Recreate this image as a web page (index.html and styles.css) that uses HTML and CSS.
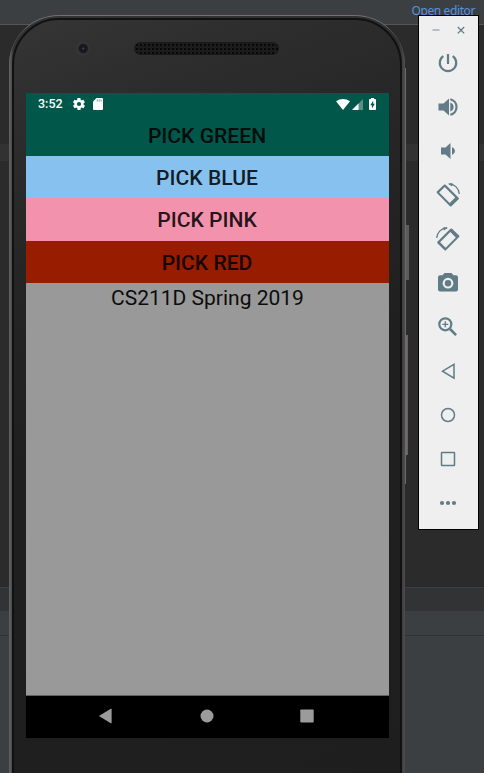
FILE: index.html
```
<!DOCTYPE html>
<html lang="en">
<head>
<meta charset="utf-8">
<title>Android Emulator</title>
<link rel="stylesheet" href="styles.css">
</head>
<body>
<div class="desktop">
  <div class="ide">
    <div class="ide-top"><span class="link">Open editor</span></div>
    <div class="ide-editor"><div class="ide-line"></div></div>
    <div class="ide-tabs"></div>
    <div class="ide-head"></div>
    <div class="ide-panel"></div>
  </div>

  <div class="side-button power"></div>
  <div class="side-button volume"></div>
  <div class="rail"></div>
  <div class="phone">
    <div class="bezel">
      <div class="face">
        <div class="camera"></div>
        <div class="speaker"></div>
      </div>
      <div class="screen">
        <div class="status">
          <span class="time">3:52</span>
          <svg class="gear" viewBox="2 2 20 20"><path fill="#fff" d="M19.4 13c0-.3.1-.6.1-1s0-.7-.1-1l2.1-1.600c.2-.2.200-.4.1-.6l-2-3.500c-.1-.2-.4-.3-.6-.2l-2.500 1c-.5-.4-1.100-.7-1.700-1l-.4-2.600c0-.3-.2-.5-.5-.5h-4c-.3 0-.5.2-.5.400l-.4 2.700c-.6.2-1.100.6-1.700 1l-2.500-1c-.2-.1-.5 0-.6.2l-2 3.500c-.1.2-.1.500.1.600L4.500 11c0 .3-.1.700-.1 1s0 .7.1 1l-2.100 1.600c-.2.200-.2.400-.1.600l2 3.500c.1.200.4.300.6.200l2.500-1c.5.400 1.100.7 1.700 1l.4 2.600c0 .3.200.5.500.5h4c.3 0 .5-.2.5-.4l.4-2.700c.6-.2 1.100-.6 1.700-1l2.500 1c.2.100.5 0 .6-.2l2-3.500c.1-.2.100-.5-.1-.6zM12 15.500a3.500 3.500 0 1 1 0-7 3.500 3.500 0 0 1 0 7z"/></svg>
          <svg class="sd" viewBox="0 0 10 12"><path fill="#fff" d="M3.500 0H9a1 1 0 0 1 1 1v10a1 1 0 0 1-1 1H1a1 1 0 0 1-1-1V3.500z"/><path stroke="#01574a" stroke-width=".6" d="M4.300 1.500v2M6.200 1.500v2M8.100 1.500v2"/></svg>
          <span class="gap"></span>
          <svg class="wifi" viewBox="0 0 14 11"><path fill="#fff" d="M0 2.200Q7-2 14 2.200L7 11z"/></svg>
          <svg class="signal" viewBox="0 0 11 11"><path fill="#5b9087" d="M11 0v11H0z"/><path fill="#fff" d="M6.500 4.500V11H0z"/></svg>
          <svg class="battery" viewBox="0 0 7 12"><path fill="#fff" d="M2 0h3v1h1.200q.8 0 .8.800v9.400q0 .8-.8.800H.8Q0 12 0 11.200V1.800Q0 1 .8 1H2z"/><path fill="#01574a" d="M4.200 2.800 1.300 7.200h1.600v3.200l2.900-4.600H4.200z"/></svg>
        </div>
        <div class="pick green">PICK GREEN</div>
        <div class="pick blue">PICK BLUE</div>
        <div class="pick pink">PICK PINK</div>
        <div class="pick red">PICK RED</div>
        <div class="content">CS211D Spring 2019</div>
        <div class="nav">
          <svg viewBox="0 0 16 16"><path fill="#9b9b9b" d="M-.1 8 11.800.800Q12.600.5 12.600 1.200v13.600q0 .7-.8.400z"/></svg>
          <svg viewBox="0 0 16 16"><circle cx="8" cy="8" r="6.500" fill="#9b9b9b"/></svg>
          <svg viewBox="0 0 16 16"><rect x="1.300" y="1.500" width="13.400" height="13" rx=".8" fill="#9b9b9b"/></svg>
        </div>
      </div>
    </div>
  </div>

  <div class="toolbar">
    <div class="window">
      <svg viewBox="0 0 12 12"><path d="M2.500 6h7" stroke="#93a5ab" stroke-width="1.300"/></svg>
      <svg viewBox="0 0 12 12"><path d="m2.800 3 6.400 6.400m0-6.400-6.400 6.400" stroke="#617c87" stroke-width="1.300"/></svg>
    </div>
    <svg class="tool" viewBox="0 0 24 24"><path class="line" d="M12 3v10M7.300 5.200a8.200 8.200 0 1 0 9.400 0"/></svg>
    <svg class="tool" viewBox="0 0 24 24"><path class="solid" d="M2.500 8.500h5l5.500-5v17l-5.500-5h-5zM14.300 7.500q3.300 1.300 3.300 4.500t-3.300 4.500z"/><path class="line" d="M14.300 4.200a8 8 0 0 1 0 15.600"/></svg>
    <svg class="tool" viewBox="0 0 24 24"><path class="solid" d="M5 8.500h4.500l5-4.500v16l-5-4.500H5zM16 8q3 1.300 3 4t-3 4z"/></svg>
    <svg class="tool" viewBox="0 0 24 24"><path class="solid" fill-rule="evenodd" d="M8 1.800q.8-.7 1.600 0l13 13q.6.700 0 1.400l-7.200 7.100q-.7.600-1.400 0L.9 9.900q-.6-.7 0-1.400zM8.700 4.100 3.200 9.500l10.500 10.400 5.500-5.400z"/><path class="line thin" d="M13 1.200c5.500-.5 10 4.300 10.300 9.800"/><path class="solid" d="m12 .8 4.500-.7-.4 3.500z"/></svg>
    <svg class="tool" viewBox="0 0 24 24"><g transform="matrix(-1 0 0 1 24 0)"><path class="solid" fill-rule="evenodd" d="M8 1.800q.8-.7 1.600 0l13 13q.6.700 0 1.400l-7.200 7.100q-.7.600-1.400 0L.9 9.900q-.6-.7 0-1.400zM9.700 5 4.200 10.400 14.400 20.700l5.500-5.400z"/><path class="line thin" d="M13 1.200c5.500-.5 10 4.300 10.300 9.800"/><path class="solid" d="m12 .8 4.500-.7-.4 3.500z"/></g></svg>
    <svg class="tool" viewBox="0 0 24 24"><path class="solid" fill-rule="evenodd" d="M8.500 2h7l2 2.300H20q2 0 2 2v12.200q0 2-2 2H4q-2 0-2-2V6.300q0-2 2-2h2.500zM12 6.800a5.400 5.400 0 1 0 0 10.800 5.400 5.400 0 0 0 0-10.800zm0 2.200a3.200 3.200 0 1 1 0 6.400 3.200 3.200 0 0 1 0-6.400z"/></svg>
    <svg class="tool" viewBox="0 0 24 24"><circle class="line" cx="9.300" cy="9.300" r="6"/><path class="line thick" d="m14 14 6.100 6.200"/><path class="line thin" d="M9.300 6.300v6M6.300 9.300h6"/></svg>
    <svg class="tool" viewBox="0 0 24 24"><path class="line mid" d="M18 5.300v13.900L6.500 12.200z"/></svg>
    <svg class="tool" viewBox="0 0 24 24"><circle class="line mid" cx="12" cy="12" r="6.500"/></svg>
    <svg class="tool" viewBox="0 0 24 24"><rect class="line mid" x="5.500" y="5.500" width="13" height="13" rx=".5"/></svg>
    <svg class="tool" viewBox="0 0 24 24"><g class="solid"><circle cx="6" cy="12" r="2.100"/><circle cx="12" cy="12" r="2.100"/><circle cx="18" cy="12" r="2.100"/></g></svg>
  </div>
</div>
</body>
</html>
```

FILE: styles.css
```
* { box-sizing: border-box; }
body { margin: 0; background: #3c3f41; }
svg { display: block; flex: none; }

.desktop { position: relative; width: 484px; height: 773px; overflow: hidden; }

.ide { display: flex; flex-direction: column; height: 100%; }
.ide-top { display: flex; justify-content: flex-end; height: 25px; padding: 3px 9px 0 0; background: #3c3f41; border-bottom: 1px solid #555657; }
.link { font: 12px/16px "Noto Sans", sans-serif; letter-spacing: -.4px; color: #5891e0; }
.ide-editor { height: 562px; padding-top: 119px; background: #2b2b2b; }
.ide-line { height: 17px; background: #323232; }
.ide-tabs { height: 24px; background: #313335; border-top: 1px solid #3d4042; }
.ide-head { height: 25px; background: #3c3f41; border-bottom: 1px solid #2f3234; }
.ide-panel { flex: 1; background: #3c3f41; }

.side-button { position: absolute; left: 405px; background: linear-gradient(90deg, #858383, #5c5a5a); }
.power { top: 225px; width: 4px; height: 55px; background: #5c5b5b; }
.volume { top: 335px; width: 3px; height: 120px; }
.rail { position: absolute; left: 405px; top: 68px; width: 1px; height: 416px; background: #6b6969; }

.phone {
  position: absolute; left: 9px; top: 15px; width: 396px; height: 800px;
  padding: 2px 3px 0 3px; border-radius: 50px 50px 0 0;
  background: linear-gradient(90deg, #636363 0, #555 2px, #343434 4px, #302f30 390px, #403d3f 393px, #4f4c4e 396px);
  border-top: 1px solid #737173;
}
.bezel {
  height: 100%; padding: 0 11px 0 12px; border: 2px solid #111; border-radius: 47px 47px 0 0;
  background: linear-gradient(160deg, #353536 0, #2d2d2e 100px, #252525 240px, #1f1f1f 430px, #1e1e1f 100%);
}
.face { position: relative; height: 73px; }
.camera {
  position: absolute; left: 49px; top: 21px; width: 15px; height: 15px; border-radius: 50%;
  background: radial-gradient(circle at 55% 50%, #55536a 0, #17171d 1.500px, #19191d 4px, #383536 5.500px, #353334 7px);
}
.speaker {
  position: absolute; left: 108px; top: 22px; width: 145px; height: 13px; border-radius: 7px;
  background: radial-gradient(circle, #080808 1px, transparent 1.300px) 0 0 / 4px 4px, #1c1c1c;
  border: 1px solid #191919;
}
.screen { display: flex; flex-direction: column; width: 363px; height: 645px; background: #999; }

.status { display: flex; align-items: center; height: 22px; padding: 0 13px 0 12px; background: #01574a; }
.time { width: 35px; font: 500 12.500px/22px Roboto, sans-serif; color: #fff; }
.gear { width: 12px; height: 12px; }
.sd { width: 10px; height: 12px; margin-left: 8px; }
.gap { flex: 1; }
.wifi { width: 14px; height: 11px; }
.signal { width: 11px; height: 11px; margin-left: 2px; }
.battery { width: 7px; height: 12px; margin-left: 6px; }

.pick { height: 42.300px; padding-right: 1px; font: 500 21.100px/44px Roboto, sans-serif; text-align: center; color: rgba(0, 0, 0, .87); }
.green { height: 41px; line-height: 42px; background: #01574a; }
.blue { background: #87c1ef; }
.pink { background: #f292ad; }
.red { background: #981c00; }
.content { flex: 1; padding-top: 3px; font: 21px/25px Roboto, sans-serif; text-align: center; color: #0c0c0c; border-bottom: 1px solid #606060; }
.nav { display: flex; justify-content: center; align-items: center; gap: 84px; height: 42px; padding: 0 2px 2px 0; background: #000; }
.nav svg { width: 16px; height: 16px; overflow: visible; }

.toolbar {
  position: absolute; left: 418px; top: 15px; width: 61px; height: 515px; padding-right: 1px;
  display: flex; flex-direction: column; align-items: center; gap: 20px;
  border: 1px solid #000; background: #efefef;
}
.window { display: flex; gap: 13px; height: 15px; padding: 8px 0 0; }
.window svg { width: 12px; height: 12px; }
.tool { width: 24px; height: 24px; overflow: visible; }
.tool .solid { fill: #617c87; }
.tool .line { fill: none; stroke: #617c87; stroke-width: 2.200; }
.tool .thin { stroke-width: 1.300; }
.tool .mid { stroke-width: 1.500; }
.tool .thick { stroke-width: 2.600; }
```
